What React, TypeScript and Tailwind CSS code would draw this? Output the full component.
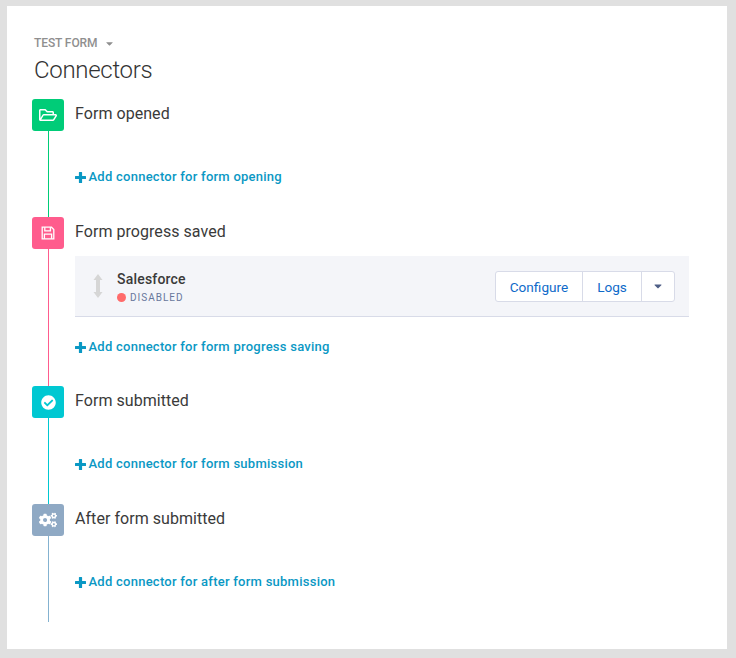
import { FaCaretDown, FaCheckCircle, FaCogs, FaRegFolderOpen } from "react-icons/fa";
import type { ReactNode } from "react";

function Stage({
  icon,
  title,
  addLabel,
  iconClass,
  lineClass,
  children,
}: {
  icon: ReactNode;
  title: string;
  addLabel: string;
  iconClass: string;
  lineClass: string;
  children?: ReactNode;
}) {
  return (
    <div className="flex">
      <div className="flex w-8 flex-col items-center">
        <div className={`flex h-8 w-8 shrink-0 items-center justify-center rounded-[3px] text-white ${iconClass}`}>
          {icon}
        </div>
        <div className={`w-px flex-1 ${lineClass}`} />
      </div>
      <div className="ml-[11px] w-[614px]">
        <h3 className="h-[29px] text-[16px] leading-[29px] tracking-[0.05px] text-[#3a3a3a]">{title}</h3>
        {children}
        <a className={`flex h-[18px] items-center gap-[3px] text-[13px] font-medium tracking-[0.25px] text-[#0a98c4] ${children ? "mt-[21px] mb-[30px]" : "mt-[40px] mb-[31px]"}`}>
          <svg width="11" height="11" viewBox="0 0 11 11" className="-ml-[0.5px] shrink-0" fill="currentColor">
            <path d="M3.900 0.500a.5.5 0 0 1 .5-.5h2.200a.5.5 0 0 1 .5.5V3.900h3.400a.5.5 0 0 1 .5.5v2.200a.5.5 0 0 1-.5.5H7.100v3.400a.5.5 0 0 1-.5.5H4.400a.5.5 0 0 1-.5-.5V7.100H.5a.5.5 0 0 1-.5-.5V4.400a.5.5 0 0 1 .5-.5h3.400z" />
          </svg>
          {addLabel}
        </a>
      </div>
    </div>
  );
}

export default function App() {
  return (
    <div className="h-[658px] w-[736px] bg-[#e0e0e0] pt-[6px] pl-[7px] font-['Roboto',sans-serif]">
      <div className="h-[643px] w-[720px] bg-white pt-[30px] pl-[25px]">
        <div className="flex h-[14px] items-center pl-[2px] text-[12px] font-medium tracking-[-0.1px] text-[#8f8f8f]">
          TEST FORM
          <FaCaretDown className="ml-[7px] h-[11px] w-[11px]" />
        </div>
        <h1 className="mt-[5px] mb-[13px] h-[31px] pl-[2px] text-[24px] leading-[31px] font-light tracking-[-0.3px] text-[#333]">Connectors</h1>
        <Stage
          icon={<FaRegFolderOpen className="h-[18px] w-[18px]" />}
          title="Form opened"
          addLabel="Add connector for form opening"
          iconClass="bg-[#00cc78]"
          lineClass="bg-[#00cc78]"
        />
        <Stage
          icon={
            <svg width="14" height="14" viewBox="0 0 14 14" fill="none" stroke="currentColor" strokeWidth="1.3">
              <path d="M1.200 1.200h9.300l2.300 2.300v9.300H1.200z" />
              <path d="M3.800 1.200v3.600h5.600V1.200M3.400 12.800V8.200h7.200v4.600" />
            </svg>
          }
          title="Form progress saved"
          addLabel="Add connector for form progress saving"
          iconClass="bg-[#ff5c8d]"
          lineClass="bg-[#ff5c8d]"
        >
          <div className="mt-[10px] flex h-[61px] items-center border-b border-[#d8dbe8] bg-[#f4f5f9] pr-[14px] pl-[15px]">
            <svg width="16" height="24" viewBox="0 0 16 24" className="shrink-0 text-[#d6d6d6]" fill="currentColor">
              <path d="M8 0l4.500 6H10v12h2.500L8 24l-4.500-6H6V6H3.500z" />
            </svg>
            <div className="ml-[11px] pt-[4px]">
              <div className="text-[14px] leading-[18px] font-medium tracking-[0.2px] text-[#3a3a3a]">Salesforce</div>
              <div className="mt-[1px] flex items-center text-[10px] leading-[18px] tracking-[1px] text-[#68779c]">
                <span className="mr-[4px] h-[9px] w-[9px] rounded-full bg-[#ff6b6b]" />
                DISABLED
              </div>
            </div>
            <div className="ml-auto flex h-[31px] rounded-[3px] border border-[#d8dbe8] bg-white text-[13.6px] text-[#0e6ac9]">
              <button className="w-[87px] border-r border-[#d8dbe8] pt-[2px]">Configure</button>
              <button className="w-[59px] border-r border-[#d8dbe8] pt-[2px]">Logs</button>
              <button className="flex w-[32px] items-center justify-center text-[#4f5f86]">
                <FaCaretDown className="h-[12px] w-[12px]" />
              </button>
            </div>
          </div>
        </Stage>
        <Stage
          icon={<FaCheckCircle className="h-[15px] w-[15px]" />}
          title="Form submitted"
          addLabel="Add connector for form submission"
          iconClass="bg-[#00c8d2]"
          lineClass="bg-[#00c8d2]"
        />
        <Stage
          icon={<FaCogs className="h-[18px] w-[18px]" />}
          title="After form submitted"
          addLabel="Add connector for after form submission"
          iconClass="bg-[#8fa9c4]"
          lineClass="bg-[#84b2d0]"
        />
      </div>
    </div>
  );
}
